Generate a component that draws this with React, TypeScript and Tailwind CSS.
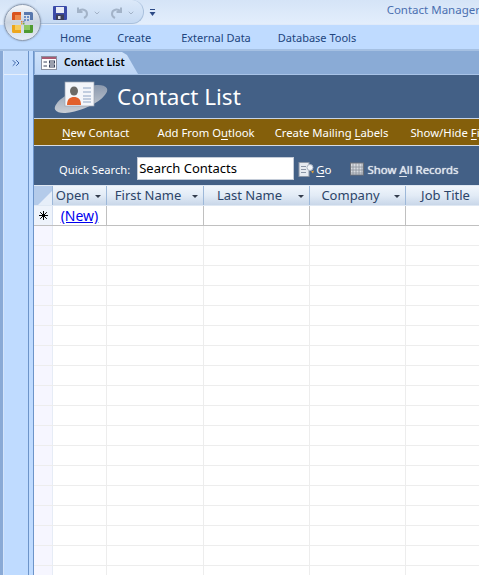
import { ChevronsRight, ChevronDown } from "lucide-react";

const FONT = "font-['Noto_Sans','Open_Sans',sans-serif]";

const columns = [
  { label: "Open", width: "w-[54px]", menu: true },
  { label: "First Name", width: "w-[97px]", menu: true },
  { label: "Last Name", width: "w-[106px]", menu: true },
  { label: "Company", width: "w-[96px]", menu: true },
  { label: "Job Title", width: "w-[90px]", menu: false },
];

function OfficeButton() {
  return (
    <div className="absolute left-[4px] top-[4px] z-10 flex h-[37px] w-[37px] items-center justify-center rounded-full border border-[#8d9bb0] bg-gradient-to-b from-[#f6f8fb] via-[#c9d3e0] to-[#e8eef6] shadow-[0_0_2px_#7f93ad]">
      <svg width="23" height="23" viewBox="0 0 23 23" fill="none">
        <path d="M1 9V2.5Q1 1 2.5 1H10V4H4V9Z" fill="#d9541e" />
        <rect x="4" y="4" width="6" height="5" fill="#ee8a4a" />
        <path d="M13 1H20.5Q22 1 22 2.5V9H19V4H13Z" fill="#5878ad" />
        <path d="M1 14H4V19H10V22H2.5Q1 22 1 20.5Z" fill="#eda61c" />
        <rect x="4" y="14" width="6" height="5" fill="#f6cc5c" />
        <path d="M13 19H19V14H22V20.5Q22 22 20.5 22H13Z" fill="#4f9a30" />
        <rect x="13" y="14" width="6" height="5" fill="#8cc763" />
        <rect x="13" y="5" width="2" height="2" fill="#6d8fc6" />
        <rect x="16" y="5" width="2" height="2" fill="#6d8fc6" />
        <rect x="13" y="8" width="2" height="2" fill="#6d8fc6" />
        <rect x="16" y="8" width="2" height="2" fill="#6d8fc6" />
        <rect x="10" y="10" width="1.5" height="1.5" fill="#e0813a" />
        <rect x="12" y="10" width="1.5" height="1.5" fill="#7a8fb5" />
        <rect x="10" y="12" width="1.5" height="1.5" fill="#e0a83a" />
        <rect x="12" y="12" width="1.5" height="1.5" fill="#6fae4a" />
      </svg>
    </div>
  );
}

function SaveIcon() {
  return (
    <svg width="14" height="14" viewBox="0 0 14 14">
      <rect width="14" height="14" rx="1" fill="#3a4aa8" />
      <rect x="3" y="1" width="8" height="6" fill="#e8ecf6" />
      <rect x="3" y="8.5" width="8" height="5.5" fill="#3c3f58" />
      <rect x="5" y="10" width="2.5" height="3" fill="#d8dce6" />
    </svg>
  );
}

function QuickAccess() {
  return (
    <div className="flex h-[24px] items-center">
      <div className="ml-[36px] flex h-[24px] w-[108px] items-center rounded-r-[12px] border-b border-r border-[#a9c0dc] bg-gradient-to-b from-[#dce9f9] to-[#c6daf3] pl-[17px] pt-[2px]">
        <SaveIcon />
        <svg className="ml-[9px]" width="13" height="13" viewBox="0 0 13 13" fill="none" stroke="#a3b3c8" strokeWidth="2">
          <path d="M2 1.5V6H6.5" />
          <path d="M2.5 5.5C5 2.5 11 3 11 8C11 10 10 11 8 12" />
        </svg>
        <ChevronDown className="ml-[4px] text-[#a3b3c8]" size={8} strokeWidth={3} />
        <svg className="ml-[9px]" width="13" height="13" viewBox="0 0 13 13" fill="none" stroke="#a3b3c8" strokeWidth="2">
          <path d="M11 1.5V6H6.5" />
          <path d="M10.5 5.5C8 2.5 2 3 2 8C2 10 3 11 5 12" />
        </svg>
        <ChevronDown className="ml-[4px] text-[#a3b3c8]" size={8} strokeWidth={3} />
      </div>
      <svg className="ml-[5px]" width="7" height="9" viewBox="0 0 7 9">
        <rect x="1" y="1" width="5" height="1" fill="#2c4a86" />
        <path d="M0.5 4H6.5L3.5 8Z" fill="#2c4a86" />
      </svg>
      <span className="-mr-[1px] -mt-[4px] ml-auto text-[11.5px] whitespace-nowrap text-[#4a6fb0]">Contact Manager</span>
    </div>
  );
}

function ContactBadge() {
  return (
    <svg className="mt-[4px]" width="54" height="36" viewBox="0 0 54 36">
      <defs>
        <linearGradient id="plate" x1="0" y1="1" x2="1" y2="0">
          <stop offset="0" stopColor="#d6d9dd" />
          <stop offset="1" stopColor="#7e8ea6" />
        </linearGradient>
      </defs>
      <ellipse cx="27" cy="18" rx="28" ry="10" transform="rotate(-22 27 18)" fill="url(#plate)" />
      <rect x="11" y="1" width="29" height="24" fill="#f4f6fa" stroke="#9aa4b2" strokeWidth="0.7" />
      <ellipse cx="20" cy="10" rx="4" ry="4.5" fill="#6c6a66" />
      <path d="M13 24C13 18 16 16 20 16C24 16 27 18 27 24Z" fill="#e2602c" />
      <path d="M29 7H37M29 11H37M29 15H37M29 18H37M29 21H37" stroke="#8ea4c4" strokeWidth="1" />
    </svg>
  );
}

function FormIcon() {
  return (
    <svg width="16" height="14" viewBox="0 0 16 14">
      <rect x="0.5" y="0.5" width="15" height="13" fill="#fdfdfe" stroke="#8a90a0" />
      <rect x="1" y="1" width="14" height="2" fill="#a85a72" />
      <path d="M2.5 6H6M2.5 10H6" stroke="#38425c" />
      <rect x="8.5" y="5" width="5" height="2" fill="none" stroke="#38425c" />
      <rect x="8.5" y="9" width="5" height="2" fill="none" stroke="#38425c" />
    </svg>
  );
}

function Underlined({ text, at }: { text: string; at: number }) {
  return (
    <>
      {text.slice(0, at)}
      <span className="underline underline-offset-2">{text[at]}</span>
      {text.slice(at + 1)}
    </>
  );
}

function HeaderCell({ label, width, menu }: { label: string; width: string; menu: boolean }) {
  return (
    <div className={`${width} relative flex h-full shrink-0 items-center justify-center border-r border-[#9db8d9] bg-gradient-to-b from-[#f1f6fc] via-[#e2ebf6] to-[#c9d7e9] text-[13px] text-[#2c4468]`}>
      <span className={menu ? "-ml-[14px]" : "-ml-[10px]"}>{label}</span>
      {menu && <span className="absolute right-[5px] top-[9px] h-0 w-0 border-x-[3px] border-t-[3px] border-x-transparent border-t-[#333c4c]" />}
    </div>
  );
}

export default function App() {
  return (
    <div className={`${FONT} relative h-[575px] w-[479px] overflow-hidden bg-[#bfdbff]`}>
      <OfficeButton />
      <header className="h-[51px] border-b-2 border-[#a5c0e2]">
        <div className="h-[25px] border-b border-[#dfeafa] bg-gradient-to-b from-[#d5e4f7] to-[#e3eefc]">
          <QuickAccess />
        </div>
        <nav className="flex h-[24px] items-center whitespace-nowrap pl-[60px] pt-[3px] text-[11px] text-[#21457e]">
          <span>Home</span>
          <span className="ml-[26px]">Create</span>
          <span className="ml-[30px]">External Data</span>
          <span className="ml-[27px]">Database Tools</span>
        </nav>
      </header>

      <div className="flex h-[524px]">
        <div className="h-full w-[3px] shrink-0 bg-[#8aaad6]" />
        <div className="h-full w-[26px] shrink-0 border-x border-l-[#d4e4fa] border-r-[#6d94c9]">
          <div className="flex h-[24px] items-center justify-center border-b border-[#e4eefc] bg-[#c4dcfb] text-[#3c64a8]">
            <ChevronsRight size={12} />
          </div>
        </div>
        <div className="w-[5px] shrink-0 border-r border-[#6d94c9]" />

        <main className="min-w-0 flex-1 bg-white">
          <div className="flex h-[24px] items-end border-b border-[#a9c4e8] bg-[#8aabd6] pl-[1px]">
            <div className="flex h-[22px] w-[103px] items-center bg-gradient-to-b from-[#cfe2fa] to-[#bdd6f6] pl-[6px] [clip-path:polygon(0_0,87px_0,92px_3px,103px_22px,0_22px)]">
              <FormIcon />
              <span className="ml-[7px] whitespace-nowrap text-[10.5px] font-semibold text-black">Contact List</span>
            </div>
          </div>

          <div className="flex h-[44px] items-center border-b border-[#c8d4e4] bg-[#436086] pl-[20px]">
            <ContactBadge />
            <span className="ml-[9px] whitespace-nowrap text-[22.5px] text-white">Contact List</span>
          </div>

          <div className="flex h-[27px] items-center whitespace-nowrap border-b border-[#d8dde4] bg-[#845f0b] pl-[28px] pt-[3px] text-[11.3px] text-white">
            <span><Underlined text="New Contact" at={0} /></span>
            <span className="ml-[28px]"><Underlined text="Add From Outlook" at={10} /></span>
            <span className="ml-[20px]"><Underlined text="Create Mailing Labels" at={15} /></span>
            <span className="ml-[22px]"><Underlined text="Show/Hide Fields" at={10} /></span>
          </div>

          <div className="flex h-[39px] items-center whitespace-nowrap bg-[#436086] pl-[25px] pt-[6px] text-[11.2px] text-white">
            <span className="mt-[3px]">Quick Search:</span>
            <div className="ml-[7px] flex h-[23px] w-[157px] items-center border border-[#c4ccd8] bg-white pl-[1px] text-[13px] text-black">Search Contacts</div>
            <svg className="ml-[4px] mt-[2px]" width="17" height="18" viewBox="0 0 17 17">
              <rect x="1" y="1" width="10" height="14" fill="#e6eaf0" stroke="#8b96a6" />
              <path d="M3 5H8M3 8H8M3 11H8" stroke="#8b96a6" />
              <circle cx="12" cy="6" r="3" fill="#f2f5f9" stroke="#aab4c2" />
              <path d="M13 10L16 9L15 12Z" fill="#e0a03a" />
            </svg>
            <span className="ml-[1px] mt-[3px] text-[11.5px]"><Underlined text="Go" at={0} /></span>
            <svg className="ml-[18px] mt-[1px]" width="14" height="14" viewBox="0 0 14 14">
              <rect x="0.5" y="1" width="13" height="12" fill="#d8dbe0" stroke="#6a6f78" />
              <path d="M3 1V13M6 1V13M9 1V13M12 1V13M1 5H13M1 8H13M1 11H13" stroke="#8c929c" strokeWidth="0.8" />
            </svg>
            <span className="ml-[4px] mt-[3px] text-[11.4px] text-[#dfe4ec] [text-shadow:0_0_1px_#fff]"><Underlined text="Show All Records" at={5} /></span>
          </div>

          <div className="flex h-[21px] border-y border-[#dfe8f3]">
            <div className="flex h-full w-[19px] shrink-0 items-end justify-end border-r border-[#9db8d9] bg-[#b4cbea]">
              <span className="h-0 w-0 border-b-[14px] border-l-[14px] border-b-[#e6eef9] border-l-transparent" />
            </div>
            {columns.map((c) => (
              <HeaderCell key={c.label} {...c} />
            ))}
          </div>

          <div className="flex h-[20px] border-b border-[#c0c0c0]">
            <div className="flex w-[19px] shrink-0 items-center justify-center border-r border-[#d5dff0] bg-[#eef3fb]">
              <svg width="9" height="9" viewBox="0 0 9 9" stroke="#000" strokeWidth="1">
                <path d="M4.5 0V9M0 4.5H9M1.2 1.2L7.8 7.8M7.8 1.2L1.2 7.8" />
              </svg>
            </div>
            <div className="w-[54px] shrink-0 border-r border-[#c0c0c0] text-center text-[14px] leading-[20px] text-[#0000ee] underline">(New)</div>
            <div className="w-[97px] shrink-0 border-r border-[#c0c0c0]" />
            <div className="w-[106px] shrink-0 border-r border-[#c0c0c0]" />
            <div className="w-[96px] shrink-0 border-r border-[#c0c0c0]" />
          </div>

          {Array.from({ length: 18 }, (_, i) => (
            <div key={i} className="flex h-[20px] border-b border-[#ededed]">
              <div className="w-[19px] shrink-0 border-r border-[#e6ecf6] bg-[#f6f6ff]" />
              <div className="w-[54px] shrink-0 border-r border-[#ededed]" />
              <div className="w-[97px] shrink-0 border-r border-[#ededed]" />
              <div className="w-[106px] shrink-0 border-r border-[#ededed]" />
              <div className="w-[96px] shrink-0 border-r border-[#ededed]" />
            </div>
          ))}
        </main>
      </div>
    </div>
  );
}
